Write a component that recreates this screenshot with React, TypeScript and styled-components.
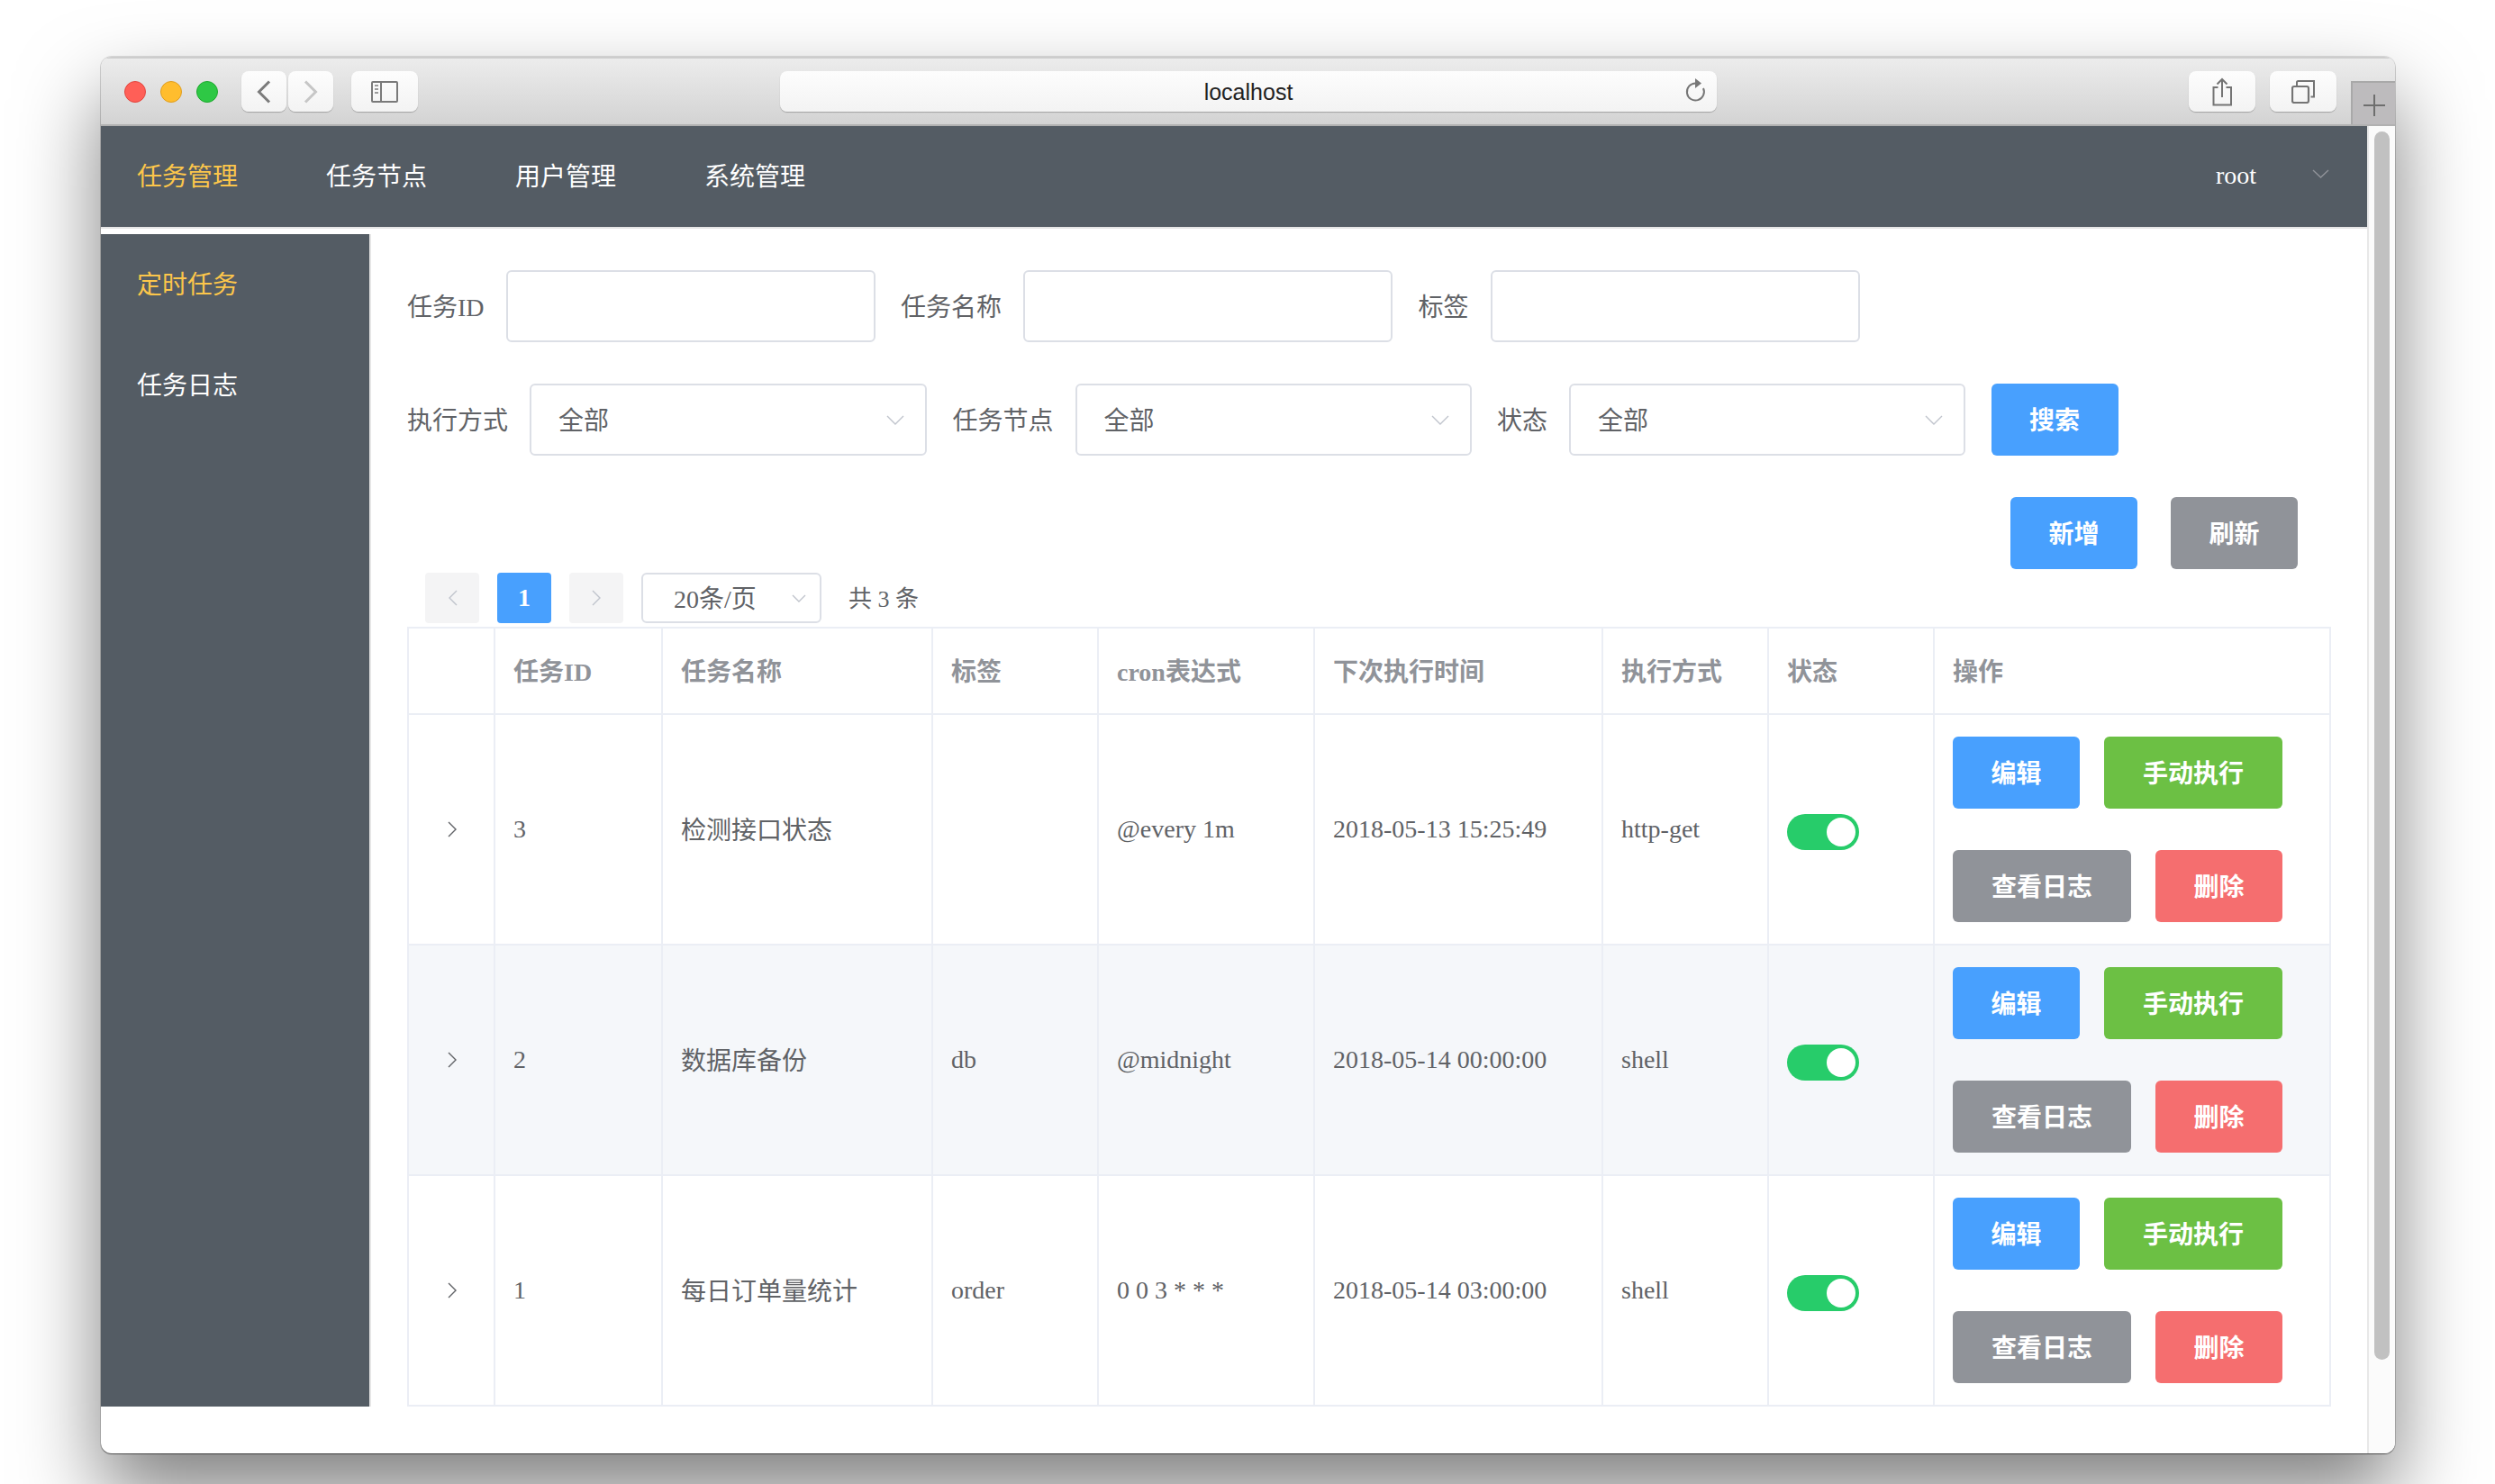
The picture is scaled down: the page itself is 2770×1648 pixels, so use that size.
import {ReactElement} from "react";
import styled, {createGlobalStyle} from "styled-components";

const GlobalStyle = createGlobalStyle`
  html, body {
    margin: 0;
    background: #fff;
    overflow: hidden;
  }
  * {
    box-sizing: border-box;
  }
`

const colors: Record<string, string> = {
  blue: "#48a0fe",
  green: "#6cc044",
  gray: "#909399",
  red: "#f56e6f",
}

const tasks = [
  {id: 3, name: "检测接口状态", tag: "", cron: "@every 1m", next: "2018-05-13 15:25:49", mode: "http-get"},
  {id: 2, name: "数据库备份", tag: "db", cron: "@midnight", next: "2018-05-14 00:00:00", mode: "shell"},
  {id: 1, name: "每日订单量统计", tag: "order", cron: "0 0 3 * * *", next: "2018-05-14 03:00:00", mode: "shell"},
]

const Chevron = ({color = "#c0c4cc", width = 20, height = 11}: {color?: string, width?: number, height?: number}): ReactElement => (
  <svg width={width} height={height} viewBox={`0 0 ${width} ${height}`} fill="none">
    <polyline points={`1,1 ${width / 2},${height - 1} ${width - 1},1`} stroke={color} strokeWidth="1.4"/>
  </svg>
)

const ArrowSide = ({dir, color}: {dir: "left" | "right", color: string}): ReactElement => (
  <svg width="11" height="18" viewBox="0 0 11 18" fill="none">
    <polyline points={dir === "left" ? "10,1 2,9 10,17" : "1,1 9,9 1,17"} stroke={color} strokeWidth="1.4"/>
  </svg>
)

const Select = ({width, text}: {width: number, text: string}): ReactElement => (
  <SelectBox $width={width}>
    <SelectText>{text}</SelectText>
    <Chevron/>
  </SelectBox>
)

const Actions = (): ReactElement => (
  <ActionWrap>
    <Button $kind="blue">编辑</Button>
    <Button $kind="green" $wide>手动执行</Button>
    <Button $kind="gray" $wide>查看日志</Button>
    <Button $kind="red">删除</Button>
  </ActionWrap>
)

export default function App(): ReactElement {
  return (
    <Page>
      <GlobalStyle/>
      <Window>
        <TitleBar>
          <Lights>
            <Light $bg="#ff5f57" $line="#e2463f"/>
            <Light $bg="#ffbd2e" $line="#e09e1f"/>
            <Light $bg="#2ec845" $line="#1fa92f"/>
          </Lights>
          <ToolButton $width={50} $left={26}>
            <svg width="16" height="26" viewBox="0 0 16 26" fill="none">
              <polyline points="14,1.5 2.5,13 14,24.5" stroke="#7b7b7b" strokeWidth="3"/>
            </svg>
          </ToolButton>
          <ToolButton $width={50} $left={2}>
            <svg width="16" height="26" viewBox="0 0 16 26" fill="none">
              <polyline points="2,1.5 13.5,13 2,24.5" stroke="#c6c6c6" strokeWidth="3"/>
            </svg>
          </ToolButton>
          <ToolButton $width={74} $left={20}>
            <svg width="30" height="24" viewBox="0 0 30 24" fill="none">
              <rect x="1" y="1" width="28" height="22" rx="1" stroke="#7a7a7a" strokeWidth="2"/>
              <line x1="11" y1="1" x2="11" y2="23" stroke="#7a7a7a" strokeWidth="2"/>
              <path d="M4 5h4M4 9h4M4 13h4" stroke="#9a9a9a" strokeWidth="2"/>
            </svg>
          </ToolButton>
          <UrlBar>
            localhost
            <ReloadIcon width="24" height="28" viewBox="0 0 24 28" fill="none">
              <path d="M12.5 6.5 A9.5 9.5 0 1 0 21 12" stroke="#777" strokeWidth="2"/>
              <path d="M12 1 L19 6.5 L12 12 Z" fill="#777"/>
            </ReloadIcon>
          </UrlBar>
          <ToolButton $width={74} $left={524}>
            <svg width="24" height="32" viewBox="0 0 24 32" fill="none">
              <path d="M7.5 11H2.5V30.5H22V11H16.5" stroke="#747474" strokeWidth="2"/>
              <path d="M12 2V22M6.5 7.5L12 2l5.5 5.5" stroke="#747474" strokeWidth="2"/>
            </svg>
          </ToolButton>
          <ToolButton $width={74} $left={16}>
            <svg width="26" height="26" viewBox="0 0 26 26" fill="none">
              <rect x="1" y="7" width="18" height="18" rx="2" stroke="#747474" strokeWidth="2.2"/>
              <path d="M6 6V2.5A1.5 1.5 0 0 1 7.5 1H25V18.5H21.5" stroke="#747474" strokeWidth="2"/>
            </svg>
          </ToolButton>
          <NewTab>
            <svg width="24" height="24" viewBox="0 0 24 24" fill="none">
              <path d="M12 0V24M0 12H24" stroke="#6e6e6e" strokeWidth="2"/>
            </svg>
          </NewTab>
        </TitleBar>

        <Viewport>
          <Content>
            <TopNav>
              <NavItem $active>任务管理</NavItem>
              <NavItem>任务节点</NavItem>
              <NavItem>用户管理</NavItem>
              <NavItem>系统管理</NavItem>
              <NavUser>
                <NavUserName>root</NavUserName>
                <Chevron color="#909399" width={19} height={10}/>
              </NavUser>
            </TopNav>
            <Body>
              <SideMenu>
                <SideItem $active>定时任务</SideItem>
                <SideItem>任务日志</SideItem>
              </SideMenu>
              <Main>
                <FormRow>
                  <FormItem>
                    <Label>任务ID</Label>
                    <TextInput/>
                  </FormItem>
                  <FormItem>
                    <Label>任务名称</Label>
                    <TextInput/>
                  </FormItem>
                  <FormItem>
                    <Label>标签</Label>
                    <TextInput/>
                  </FormItem>
                </FormRow>
                <FormRow>
                  <FormItem>
                    <Label>执行方式</Label>
                    <Select width={441} text="全部"/>
                  </FormItem>
                  <FormItem>
                    <Label>任务节点</Label>
                    <Select width={440} text="全部"/>
                  </FormItem>
                  <FormItem>
                    <Label>状态</Label>
                    <Select width={440} text="全部"/>
                  </FormItem>
                  <Button $kind="blue">搜索</Button>
                </FormRow>
                <ToolRow>
                  <Button $kind="blue">新增</Button>
                  <Button $kind="gray">刷新</Button>
                </ToolRow>
                <Pagination>
                  <PageButton><ArrowSide dir="left" color="#c0c4cc"/></PageButton>
                  <PageButton $active>1</PageButton>
                  <PageButton><ArrowSide dir="right" color="#c0c4cc"/></PageButton>
                  <PageSize>
                    <SelectText>20条/页</SelectText>
                    <Chevron width={16} height={9}/>
                  </PageSize>
                  <PageTotal>共 3 条</PageTotal>
                </Pagination>
                <Table>
                  <colgroup>
                    <col width="96"/>
                    <col width="186"/>
                    <col width="300"/>
                    <col width="184"/>
                    <col width="240"/>
                    <col width="320"/>
                    <col width="184"/>
                    <col width="184"/>
                    <col width="440"/>
                  </colgroup>
                  <thead>
                    <tr>
                      <HeadCell/>
                      <HeadCell>任务ID</HeadCell>
                      <HeadCell>任务名称</HeadCell>
                      <HeadCell>标签</HeadCell>
                      <HeadCell>cron表达式</HeadCell>
                      <HeadCell>下次执行时间</HeadCell>
                      <HeadCell>执行方式</HeadCell>
                      <HeadCell>状态</HeadCell>
                      <HeadCell>操作</HeadCell>
                    </tr>
                  </thead>
                  <tbody>
                    {tasks.map((task, index) => (
                      <tr key={task.id}>
                        <ExpandCell $striped={index === 1}>
                          <ArrowSide dir="right" color="#606266"/>
                        </ExpandCell>
                        <Cell $striped={index === 1}>{task.id}</Cell>
                        <NameCell $striped={index === 1}>{task.name}</NameCell>
                        <Cell $striped={index === 1}>{task.tag}</Cell>
                        <Cell $striped={index === 1}>{task.cron}</Cell>
                        <Cell $striped={index === 1}>{task.next}</Cell>
                        <Cell $striped={index === 1}>{task.mode}</Cell>
                        <Cell $striped={index === 1}><Switch/></Cell>
                        <Cell $striped={index === 1}><Actions/></Cell>
                      </tr>
                    ))}
                  </tbody>
                </Table>
              </Main>
            </Body>
          </Content>
          <ScrollGutter>
            <ScrollThumb/>
          </ScrollGutter>
        </Viewport>
      </Window>
    </Page>
  )
}

const Page = styled.div`
  width: 2770px;
  height: 1648px;
  padding: 63px 0 0 112px;
  overflow: hidden;
  background: #fff;
  font-family: "Liberation Serif", "Noto Sans CJK SC", serif;
  font-size: 28px;
  color: #606266;
`

const Window = styled.div`
  width: 2547px;
  height: 1551px;
  display: flex;
  flex-direction: column;
  background: #fff;
  border-radius: 12px;
  overflow: hidden;
  box-shadow: 0 45px 90px rgba(0, 0, 0, .5), 0 0 0 1px rgba(0, 0, 0, .12), 0 1px 1px rgba(0, 0, 0, .5);
`

const TitleBar = styled.div`
  height: 77px;
  flex: none;
  display: flex;
  align-items: center;
  padding-left: 26px;
  background: linear-gradient(#ececec, #d3d3d3);
  border-top: 2px solid #cdcdcd;
  border-bottom: 2px solid #b1b1b1;
`

const Lights = styled.div`
  display: flex;
  gap: 16px;
`

const Light = styled.span<{$bg: string, $line: string}>`
  width: 24px;
  height: 24px;
  border-radius: 50%;
  background: ${p => p.$bg};
  border: 1px solid ${p => p.$line};
`

const ToolButton = styled.div<{$width: number, $left: number}>`
  width: ${p => p.$width}px;
  height: 45px;
  margin-left: ${p => p.$left}px;
  display: flex;
  align-items: center;
  justify-content: center;
  flex: none;
  background: linear-gradient(#fdfdfd, #f3f3f3);
  border-radius: 8px;
  box-shadow: 0 1px 1px rgba(0, 0, 0, .25);
`

const UrlBar = styled.div`
  width: 1040px;
  height: 45px;
  margin-left: 402px;
  padding-top: 2px;
  flex: none;
  position: relative;
  display: flex;
  align-items: center;
  justify-content: center;
  background: linear-gradient(#fdfdfd, #f3f3f3);
  border-radius: 8px;
  box-shadow: 0 1px 1px rgba(0, 0, 0, .25);
  font-family: "Liberation Sans", sans-serif;
  font-size: 25px;
  color: #222;
`

const ReloadIcon = styled.svg`
  position: absolute;
  right: 12px;
  top: 7px;
`

const NewTab = styled.div`
  width: 49px;
  height: 48px;
  margin-left: 16px;
  padding-top: 3px;
  align-self: flex-end;
  flex: none;
  display: flex;
  align-items: center;
  justify-content: center;
  background: #bdbbbd;
  border-top: 2px solid #a9a9a9;
  border-left: 2px solid #a9a9a9;
`

const Viewport = styled.div`
  flex: 1;
  display: flex;
  min-height: 0;
`

const Content = styled.div`
  width: 2516px;
  flex: none;
`

const TopNav = styled.div`
  height: 114px;
  display: flex;
  align-items: center;
  gap: 98px;
  padding: 0 42px 0 40px;
  background: #545c64;
  border-bottom: 2px solid #e6e6e6;
  color: #fff;
`

const NavItem = styled.div<{$active?: boolean}>`
  padding-bottom: 4px;
  color: ${p => p.$active ? "#fcc64b" : "#fff"};
`

const NavUser = styled.div`
  margin-left: auto;
  display: flex;
  align-items: center;
  gap: 62px;

  svg {
    margin-bottom: 6px;
  }
`

const NavUserName = styled.span`
  padding-bottom: 2px;
`

const Body = styled.div`
  display: flex;
  align-items: flex-start;
`

const SideMenu = styled.div`
  width: 300px;
  height: 1302px;
  margin-top: 6px;
  flex: none;
  background: #545c64;
  border-right: 2px solid #e6e6e6;
`

const SideItem = styled.div<{$active?: boolean}>`
  height: 112px;
  padding: 0 0 4px 40px;
  display: flex;
  align-items: center;
  color: ${p => p.$active ? "#fcc64b" : "#fff"};
`

const Main = styled.div`
  width: 2216px;
  padding: 46px 40px 0 40px;
`

const FormRow = styled.div`
  display: flex;
  align-items: center;
  margin-bottom: 46px;
`

const FormItem = styled.div`
  display: flex;
  align-items: center;
  margin-right: 28.5px;
`

const Label = styled.label`
  margin-right: 24px;
  padding-bottom: 3px;
`

const TextInput = styled.input`
  width: 410px;
  height: 80px;
  border: 2px solid #dcdfe6;
  border-radius: 6px;
  background: #fff;
  outline: none;
`

const SelectBox = styled.div<{$width: number}>`
  width: ${p => p.$width}px;
  height: 80px;
  display: flex;
  align-items: center;
  justify-content: space-between;
  padding: 0 23px 0 30px;
  border: 2px solid #dcdfe6;
  border-radius: 6px;
`

const SelectText = styled.span`
  padding-bottom: 3px;
`

const Button = styled.button<{$kind: string, $wide?: boolean}>`
  width: ${p => p.$wide ? 198 : 141}px;
  height: 80px;
  padding: 0 0 3px;
  border: none;
  border-radius: 6px;
  background: ${p => colors[p.$kind]};
  color: #fff;
  font-family: inherit;
  font-size: 28px;
  font-weight: bold;
`

const ToolRow = styled.div`
  display: flex;
  justify-content: flex-end;
  gap: 37px;
  padding-right: 37px;
`

const Pagination = styled.div`
  height: 56px;
  margin: 4px 0;
  padding-left: 20px;
  display: flex;
  align-items: center;
  gap: 20px;
`

const PageButton = styled.div<{$active?: boolean}>`
  width: 60px;
  height: 56px;
  display: flex;
  align-items: center;
  justify-content: center;
  border-radius: 4px;
  background: ${p => p.$active ? "#48a0fe" : "#f4f4f5"};
  color: #fff;
  font-weight: bold;
`

const PageSize = styled.div`
  width: 200px;
  height: 56px;
  display: flex;
  align-items: center;
  justify-content: space-between;
  padding: 0 15px 0 34px;
  border: 2px solid #dcdfe6;
  border-radius: 6px;
`

const PageTotal = styled.span`
  margin-left: 10px;
  padding-bottom: 3px;
  font-size: 26px;
`

const Table = styled.table`
  width: 2136px;
  table-layout: fixed;
  border-collapse: separate;
  border-spacing: 0;
  border-top: 2px solid #ebeef5;
  border-left: 2px solid #ebeef5;
`

const HeadCell = styled.th`
  height: 96px;
  padding: 0 0 3px 20px;
  text-align: left;
  font-weight: bold;
  color: #909399;
  border-right: 2px solid #ebeef5;
  border-bottom: 2px solid #ebeef5;
`

const Cell = styled.td<{$striped?: boolean}>`
  height: 256px;
  padding: 24px 0 24px 20px;
  background: ${p => p.$striped ? "#f5f7fa" : "#fff"};
  border-right: 2px solid #ebeef5;
  border-bottom: 2px solid #ebeef5;
`

const NameCell = styled(Cell)`
  padding-bottom: 27px;
`

const ExpandCell = styled(Cell)`
  padding: 0 0 0 3px;
  text-align: center;
`

const Switch = styled.span`
  display: block;
  position: relative;
  width: 80px;
  height: 40px;
  margin-top: 6px;
  border-radius: 20px;
  background: #27cc6a;

  &::after {
    content: "";
    position: absolute;
    top: 4px;
    right: 4px;
    width: 32px;
    height: 32px;
    border-radius: 50%;
    background: #fff;
  }
`

const ActionWrap = styled.div`
  width: 366px;
  display: flex;
  flex-wrap: wrap;
  gap: 46px 27px;
`

const ScrollGutter = styled.div`
  flex: 1;
  padding: 6px 0 0 6px;
  background: #fbfbfb;
  border-left: 2px solid #e8e8e8;
`

const ScrollThumb = styled.div`
  width: 17px;
  height: 1364px;
  border-radius: 9px;
  background: #c1c1c1;
`
